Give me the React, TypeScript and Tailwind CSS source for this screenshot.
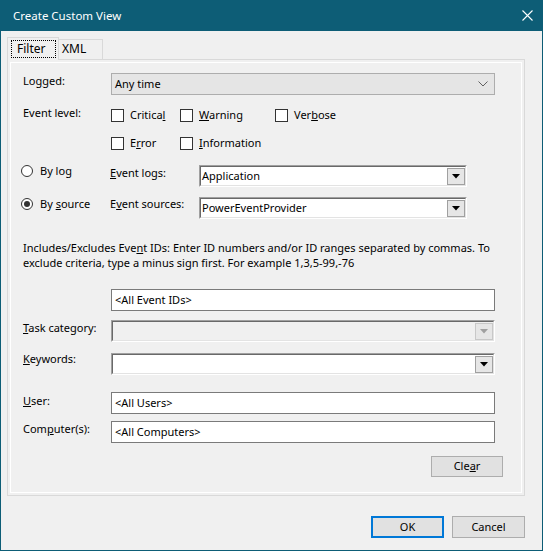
import React from 'react';

const font = { fontFamily: '"Noto Sans", "Open Sans", sans-serif' };

const Check = ({ children }: { children: React.ReactNode }) => (
  <div className="flex items-center h-[16px]">
    <div className="w-[13px] h-[13px] border border-[#333333] bg-white" />
    <span className="ml-[6px]">{children}</span>
  </div>
);

const Radio = ({ on }: { on?: boolean }) => (
  <div className="w-[12px] h-[12px] rounded-full border border-[#333333] bg-white flex items-center justify-center">
    {on && <div className="w-[6px] h-[6px] rounded-full bg-[#333333]" />}
  </div>
);

const Arrow = ({ disabled }: { disabled?: boolean }) => (
  <div className={`w-[18px] h-[17px] mt-[1px] border flex items-center justify-center ${disabled ? 'border-[#c8c8c8] bg-[#e6e6e6]' : 'border-[#a0a0a0] bg-[#e6e6e6]'}`}>
    <svg width="8" height="5" viewBox="0 0 8 5">
      <polygon points="0,0 8,0 4,4.5" fill={disabled ? '#a0a0a0' : '#000'} />
    </svg>
  </div>
);

const Sunken = ({ value, disabled, className }: { value?: string; disabled?: boolean; className: string }) => (
  <div className={`flex h-[22px] border border-t-[#a0a0a0] border-l-[#a0a0a0] border-b-white border-r-white ${className}`}>
    <div className={`flex flex-1 items-start border border-t-[#696969] border-l-[#696969] border-b-[#e3e3e3] border-r-[#e3e3e3] ${disabled ? 'bg-[#f0f0f0]' : 'bg-white'}`}>
      <span className="flex-1 pl-[1px] leading-[18px]">{value}</span>
      <Arrow disabled={disabled} />
    </div>
  </div>
);

const TextBox = ({ value, className }: { value: string; className: string }) => (
  <div className={`h-[22px] border border-[#7a7a7a] bg-white pl-[3px] leading-[20px] ${className}`}>{value}</div>
);

export default function App() {
  return (
    <div
      className="w-[543px] h-[551px] bg-[#f0f0f0] border-x border-b border-[#0d5d76] text-[11px] text-black flex flex-col"
      style={font}
    >
      <div className="h-[31px] -mx-px bg-[#0d5d76] flex items-center justify-between pl-[13px] pr-[10px] text-white text-[11.5px]">
        <span className="leading-[16px]">Create Custom View</span>
        <svg width="11" height="11" viewBox="0 0 11 11">
          <path d="M0.5 0.5 L10.5 10.5 M10.5 0.5 L0.5 10.5" stroke="#ffffff" strokeWidth="1.1" />
        </svg>
      </div>

      <div className="flex items-end ml-[6px] mt-[6px] h-[22px]">
        <div className="relative z-10 w-[52px] h-[23px] -mb-px border-x border-t border-[#d9d9d9] bg-[#f0f0f0] pt-[2px] pl-[3px]">
          <div className="w-[45px] h-[18px] border border-dotted border-black pl-[5px] leading-[16px] text-[12px]">Filter</div>
        </div>
        <div className="w-[44px] h-[20px] border-r border-t border-[#d9d9d9] pl-[3px] leading-[18px] text-[12px]">XML</div>
      </div>

      <div className="ml-[6px] w-[518px] h-[437px] border border-[#d9d9d9] p-[2px]">
        <div className="h-full border border-white pl-[12px] flex flex-col">
          <div className="flex items-start mt-[10px] h-[22px]">
            <span className="w-[88px] leading-[16px]">Lo<u>g</u>ged:</span>
            <div className="w-[384px] h-[22px] border border-[#adadad] bg-[#e5e5e5] flex items-center justify-between pl-[3px] pr-[6px]">
              <span>Any time</span>
              <svg width="10" height="6" viewBox="0 0 10 6">
                <path d="M0.5 0.5 L5 5 L9.5 0.5" fill="none" stroke="#606060" strokeWidth="1" />
              </svg>
            </div>
          </div>

          <div className="flex items-start mt-[12px] h-[16px]">
            <span className="w-[88px] leading-[16px] -mt-[2px]">Event level:</span>
            <div className="w-[69px]"><Check>Critica<u>l</u></Check></div>
            <div className="w-[95px]"><Check><u>W</u>arning</Check></div>
            <Check>Ver<u>b</u>ose</Check>
          </div>

          <div className="flex items-start mt-[12px] h-[16px]">
            <span className="w-[88px]" />
            <div className="w-[69px]"><Check>E<u>r</u>ror</Check></div>
            <Check><u>I</u>nformation</Check>
          </div>

          <div className="flex items-start mt-[14px] h-[22px]">
            <div className="-ml-[2px] w-[19px]"><Radio /></div>
            <span className="w-[70px] leading-[16px] -mt-[2px]">By lo<u>g</u></span>
            <span className="w-[89px] leading-[16px]"><u>E</u>vent logs:</span>
            <Sunken value="Application" className="w-[268px]" />
          </div>

          <div className="flex items-start mt-[10px] h-[22px]">
            <div className="-ml-[2px] w-[19px] mt-[1px]"><Radio on /></div>
            <span className="w-[70px] leading-[16px] -mt-[1px]">By <u>s</u>ource</span>
            <span className="w-[89px] leading-[16px] -mt-[1px]">E<u>v</u>ent sources:</span>
            <Sunken value="PowerEventProvider" className="w-[268px]" />
          </div>

          <p className="mt-[21px] leading-[15px] whitespace-nowrap">
            Includes/Excludes Eve<u>n</u>t IDs: Enter ID numbers and/or ID ranges separated by commas. To
            <br />
            exclude criteria, type a minus sign first. For example 1,3,5-99,-76
          </p>

          <div className="flex mt-[19px]">
            <span className="w-[88px]" />
            <TextBox value="<All Event IDs>" className="w-[384px]" />
          </div>

          <div className="flex items-start mt-[9px] h-[22px]">
            <span className="w-[88px] leading-[16px]"><u>T</u>ask category:</span>
            <Sunken disabled className="w-[384px]" />
          </div>

          <div className="flex items-start mt-[11px] h-[22px]">
            <span className="w-[88px] leading-[16px] -mt-[2px]"><u>K</u>eywords:</span>
            <Sunken className="w-[384px]" />
          </div>

          <div className="flex items-start mt-[17px] h-[22px]">
            <span className="w-[88px] leading-[16px] mt-px"><u>U</u>ser:</span>
            <TextBox value="<All Users>" className="w-[384px]" />
          </div>

          <div className="flex items-start mt-[7px] h-[22px]">
            <span className="w-[88px] leading-[16px]">Com<u>p</u>uter(s):</span>
            <TextBox value="<All Computers>" className="w-[384px]" />
          </div>

          <div className="flex mt-[13px] pl-[408px]">
            <div className="w-[72px] h-[21px] border border-[#adadad] bg-[#e1e1e1] flex items-center justify-center">
              Cle<u>a</u>r
            </div>
          </div>
        </div>
      </div>

      <div className="flex justify-end gap-[8px] mt-[20px] pr-[17px]">
        <div className="w-[73px] h-[22px] border-2 border-[#0078d7] bg-[#e1e1e1] flex items-center justify-center">OK</div>
        <div className="w-[73px] h-[22px] border border-[#adadad] bg-[#e1e1e1] flex items-center justify-center">Cancel</div>
      </div>
    </div>
  );
}
